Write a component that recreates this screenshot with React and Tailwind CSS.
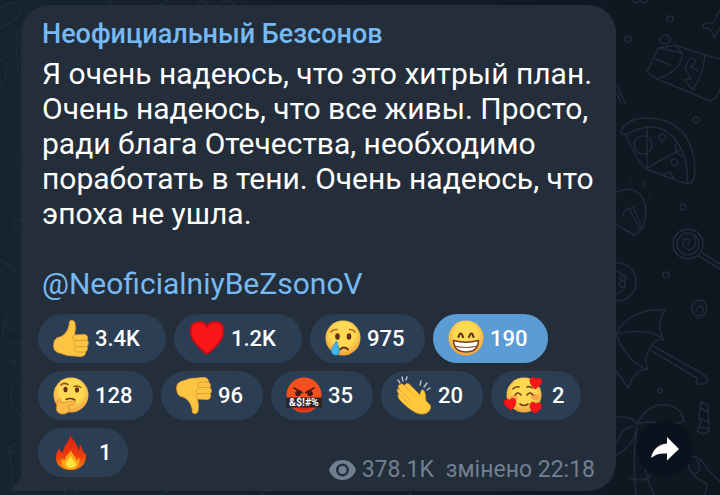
import React from 'react';

const Thumb = () => (
  <g strokeLinejoin="round" strokeLinecap="round">
    <path
      d="M16.500 2C17 -0.500 21 -0.500 22 3C23 8 22 11 21.500 15L31 14.500C34.500 14.500 35.500 18 34 20C36 22 35.500 25 34 26.500C35 29 34 31 32.500 32C33 35 30 36.800 27 36.500L15 35.500C12 35 9 33.500 5 32.500C1 31 0 27 1 23C1.500 19 4 17.500 7 17C11 15.500 16 11 16.500 2Z"
      fill="#fcc440"
      stroke="#eda136"
      strokeWidth=".8"
    />
    <path d="M21.500 15C19 17 19 19 22 20.500H33M22 20.500C20 22 20 25 23 26.500H33M23 26.500C21 28 21 31 24 32H32" fill="none" stroke="#e89b33" strokeWidth="1" />
  </g>
);

const Face = ({ id, children }) => (
  <g>
    <radialGradient id={id} cx="50%" cy="40%" r="60%">
      <stop offset="55%" stopColor="#ffd953" />
      <stop offset="100%" stopColor="#f2a03a" />
    </radialGradient>
    <circle cx="18" cy="18" r="17.500" fill={`url(#${id})`} />
    {children}
  </g>
);

const Heart = ({ transform }) => (
  <path
    transform={transform}
    d="M18 34C10 28 1.500 20 1.500 11C1.500 5 5 2 10 2C14 2 17 4 18 7C19 4 22 2 26 2C31 2 34.500 5 34.500 11C34.500 20 26 28 18 34Z"
    fill="#fb1618"
    stroke="#c50d18"
    strokeWidth="1.800"
  />
);

const emojis = {
  like: <Thumb />,
  heart: <Heart />,
  cry: (
    <Face id="cry">
      <ellipse cx="12.500" cy="16.500" rx="2.300" ry="3.200" fill="#633014" />
      <ellipse cx="24" cy="16.500" rx="2.300" ry="3.200" fill="#633014" />
      <path d="M6 12Q8 9 12 9.500M24.500 9.500Q28 9 30 12" fill="none" stroke="#a8622a" strokeWidth="1.500" strokeLinecap="round" />
      <path d="M15 29.500Q19 25.500 23 29.500" fill="none" stroke="#633014" strokeWidth="1.800" strokeLinecap="round" />
      <path d="M11.500 21C9 25 6.500 28 6.500 31C6.500 34 9 35.500 11.500 35C14 34.500 15 32 14 29C13.500 26 12 24 11.500 21Z" fill="#45b5ee" stroke="#2489c9" strokeWidth=".8" />
    </Face>
  ),
  grin: (
    <Face id="grin">
      <path d="M10.500 17Q12.500 10 15 17M21 17Q23.500 10 25.500 17" fill="none" stroke="#633014" strokeWidth="2.200" strokeLinecap="round" />
      <path d="M5.500 20.500Q18 24 30.500 20.500Q30 32 18 32Q6 32 5.500 20.500Z" fill="#fff" stroke="#7a3c1c" strokeWidth="1.500" strokeLinejoin="round" />
      <path d="M7 26Q18 29 29 26" fill="none" stroke="#8b5434" strokeWidth="1.200" />
    </Face>
  ),
  think: (
    <Face id="think">
      <ellipse cx="12.500" cy="12.500" rx="2.100" ry="2.700" fill="#633014" />
      <ellipse cx="24" cy="13" rx="2.100" ry="2.700" fill="#633014" />
      <path d="M8 8Q11 5 15 7.500M21 9.500Q25 8 28 10.500" fill="none" stroke="#8b5020" strokeWidth="1.500" strokeLinecap="round" />
      <path d="M13 22.500Q17 20.500 22 23" fill="none" stroke="#633014" strokeWidth="1.500" strokeLinecap="round" />
      <path d="M5 23C7 20 8 22 7.500 26L20 24C24 24 23 27 20 28L15 29C18 31 16 37 10 37C5 37 3 34 3.500 30Z" fill="#fbbb48" stroke="#e08e30" strokeWidth=".8" strokeLinejoin="round" />
    </Face>
  ),
  dislike: (
    <g transform="translate(0 37) scale(1 -1)">
      <Thumb />
    </g>
  ),
  angry: (
    <g>
      <circle cx="18" cy="18" r="17.500" fill="#f4511e" />
      <path d="M2 24A17.500 17.500 0 0 0 34 24Z" fill="#d92d16" />
      <path d="M8 11L16 15.500M28 11L20 15.500" stroke="#5a1a10" strokeWidth="2" strokeLinecap="round" />
      <circle cx="12" cy="16.500" r="2.800" fill="#4a1710" />
      <circle cx="24" cy="16.500" r="2.800" fill="#4a1710" />
      <rect x="0" y="20.500" width="36" height="10" rx="1" fill="#2c2326" />
      <text x="18" y="29" textAnchor="middle" fontSize="10.500" fontWeight="700" fill="#fff">&amp;$!#%</text>
    </g>
  ),
  clap: (
    <g strokeLinecap="round" strokeLinejoin="round">
      <path d="M4 8C5 6 7 7 9 9C9 6 12 6 14 8L24 18C25 15 25 12 27 13C30 15 29 20 30 24L34 28C36 32 32 37 26 37C19 37 11 30 5 24C2 21 1 18 3 17C0 13 1 11 4 13C1 10 3 7 4 8Z" fill="#ffc83d" stroke="#eaa02e" strokeWidth=".8" />
      <path d="M4 13L14 23M4 18L12 26M9 9L19 19" stroke="#e9a236" strokeWidth="1" />
      <path d="M2 3L4 6M6 0L7 4M11 0L10 3M24 8L25 4M28 10L31 6M31 13L34 11" stroke="#b7c4d0" strokeWidth="1.400" />
    </g>
  ),
  love: (
    <Face id="love">
      <ellipse cx="8" cy="21" rx="4" ry="3" fill="#f6904b" opacity=".6" />
      <ellipse cx="29" cy="20" rx="4" ry="3" fill="#f6904b" opacity=".7" />
      <path d="M9 18Q12 14 15 18M21 18Q24 14 27 18M7 12Q9 9 13 10M21 10Q24 9 26 11M14 27Q18 30 22 27" fill="none" stroke="#74401b" strokeWidth="1.600" strokeLinecap="round" />
      <Heart transform="translate(24 -1) rotate(8) scale(.36)" />
      <Heart transform="translate(-3 22) rotate(-8) scale(.36)" />
      <Heart transform="translate(24 24) rotate(8) scale(.35)" />
    </Face>
  ),
  fire: (
    <g>
      <linearGradient id="flame" x1="0" y1="0" x2="0" y2="1">
        <stop offset="0%" stopColor="#d9200f" />
        <stop offset="60%" stopColor="#ee3c0d" />
        <stop offset="100%" stopColor="#fb850c" />
      </linearGradient>
      <path d="M17 0C18 5 25 9 25.500 17C27 15 27 12 26.500 10C30 14 29 18 33 20C34 29 28 36 18 36C8 36 2 30 3 22C3 19 5 17 6 14C7 16 8 18 10 19C10 11 17 8 17 0Z" fill="url(#flame)" />
      <path d="M18 16C19 21 23 22 23.500 26C25 26 26 24 26 23C28 30 24 35.500 18 35.500C11 35.500 7 31 9 24C10 26 11 27 12 26C12 21 17 20 18 16Z" fill="#ffa514" />
      <path d="M18 22C19 26 23 27 23 31C22 35 14 35 13 31C12 27 16 26 18 22Z" fill="#ffe23e" />
    </g>
  ),
};

const reactions = [
  { emoji: 'like', label: 'Like', count: '3.4K', size: 'min-w-[128px] gap-1.5' },
  { emoji: 'heart', label: 'Heart', count: '1.2K', size: 'min-w-[128px] gap-1.5' },
  { emoji: 'cry', label: 'Cry', count: '975', size: 'min-w-[115px] gap-1.5' },
  { emoji: 'grin', label: 'Grin', count: '190', size: 'min-w-[115px] gap-1.5', active: true },
  { emoji: 'think', label: 'Think', count: '128', size: 'min-w-[115px] gap-1.5' },
  { emoji: 'dislike', label: 'Dislike', count: '96', size: 'min-w-[102px] gap-1.5' },
  { emoji: 'angry', label: 'Angry', count: '35', size: 'min-w-[102px] gap-1.5' },
  { emoji: 'clap', label: 'Clap', count: '20', size: 'min-w-[102px] gap-1.5' },
  { emoji: 'love', label: 'Love', count: '2', size: 'min-w-[90px] gap-2.5' },
  { emoji: 'fire', label: 'Fire', count: '1', size: 'min-w-[90px] gap-2.5' },
];

const Reaction = ({ reaction }) => (
  <button
    aria-label={`${reaction.label} ${reaction.count}`}
    aria-pressed={Boolean(reaction.active)}
    className={`flex h-[49px] items-center rounded-full pl-[15px] text-[22px] font-medium text-white ${reaction.size} ${reaction.active ? 'bg-[#5c9cd5]' : 'bg-[#2c3e53]'}`}
  >
    <svg viewBox="0 0 36 37" className="h-[37px] w-9 shrink-0 overflow-visible" aria-hidden="true">
      {emojis[reaction.emoji]}
    </svg>
    <span>{reaction.count}</span>
  </button>
);

// Faint doodles on the chat wallpaper
const Wallpaper = () => (
  <svg
    viewBox="0 0 720 495"
    preserveAspectRatio="xMaxYMin slice"
    className="absolute inset-0 h-full w-full"
    fill="none"
    stroke="#1e2b39"
    strokeWidth="1.500"
    strokeLinecap="round"
    strokeLinejoin="round"
    aria-hidden="true"
  >
    {/* left edge */}
    <path d="M0 8Q18 -2 20 8Q20 20 0 28M20 30Q12 38 19 46Q13 54 19 62Q15 70 21 75M0 60Q10 60 5 78L0 90M20 153Q12 158 20 164M21 220Q13 218 14 226L21 234" />
    <path d="M0 260L14 268Q16 276 8 277L0 270M20 310Q12 306 11 315Q4 314 6 324Q-2 338 10 342L21 343M3 325L20 332M21 375Q4 390 15 408L21 415M20 442L9 447L14 491M10 452L20 450" />
    <circle cx="13" cy="362" r="2" />
    <path d="M109 0L112 5M168 0Q164 6 157 5M197 5Q202 -2 208 5M217 5Q228 -3 235 5" />
    {/* dots */}
    <circle cx="670" cy="19" r="3" />
    <circle cx="628" cy="39" r="3" />
    <circle cx="696" cy="120" r="3" />
    <circle cx="683" cy="207" r="3" />
    <circle cx="666" cy="275" r="3" />
    <circle cx="660" cy="391" r="2" />
    {/* bottle */}
    <path d="M633 0Q635 5 640 1Q645 5 648 0M720 10L713 23Q702 22 703 28L710 29L714 37L720 28" />
    <path d="M658 48L647 72L657 79L710 101L716 98L720 89M658 48L675 45L705 55L720 59M658 48L682 53L675 45M682 53Q683 70 657 79M654 58L670 65M705 55Q703 75 693 90L684 80L691 79L685 68Q689 54 696 60L691 67L698 71M660 43Q658 36 667 35Q674 38 667 44Z" />
    <path d="M617 85L625 103M617 93L621 103" />
    {/* pizza slice */}
    <path d="M621 131Q626 120 642 118Q686 116 694 158Q697 182 689 184L678 181L646 169Q634 156 626 135M621 131Q622 136 627 134Q668 112 685 158Q688 172 687 182M647 126V168L681 149M664 175Q670 168 674 179M676 143Q673 153 683 156" />
    <circle cx="643" cy="145" r="9" />
    <path d="M659 136Q664 131 666 138Q660 145 659 136M671 160Q677 157 678 164Q672 170 671 160" />
    {/* light bulb */}
    <path d="M617 192Q638 183 645 204Q647 214 643 228L634 235L617 225M624 217Q622 210 629 209L641 230M630 209L633 207L642 227M630 178V180M643 185L645 183M650 198L651 197" />
    {/* lollipop */}
    <circle cx="688" cy="244" r="15" />
    <circle cx="688" cy="244" r="11" />
    <path d="M688 244Q692 238 684 239Q680 248 690 250Q699 245 694 237M702 253L720 264M699 256L720 269" />
    {/* billiard ball */}
    <path d="M617 263A19 19 0 0 1 617 301M617 271A12 12 0 0 1 617 294" />
    <circle cx="623" cy="278" r="3" />
    <circle cx="622" cy="284" r="3" />
    <path d="M696 311Q699 303 703 308Q704 317 695 315Q688 307 696 301Q706 298 707 309Q704 319 696 318" />
    {/* umbrella */}
    <path d="M616 334Q630 308 665 310Q655 326 664 340Q653 338 649 350Q643 359 648 370Q637 366 628 388L616 371M616 334Q650 327 664 340M616 334Q626 361 648 370M650 350L697 378Q698 384 695 382M653 346L703 374Q711 380 705 384L697 384" />
    {/* candy */}
    <path d="M701 402L708 405L709 431L703 434L697 431L701 423L699 416ZM700 408L708 412M699 418L708 422M699 427L708 429" />
    {/* palm */}
    <path d="M617 417Q632 415 637 424Q645 408 659 405Q680 403 684 421L677 424L646 422L637 424Q637 443 617 455M634 426Q621 428 617 442M637 430Q632 455 636 495M642 446Q644 474 654 495M630 478Q645 483 651 475" />
    {/* fish */}
    <path d="M689 457Q699 453 708 470L720 482M689 457Q685 471 701 481L707 484L705 495M697 460Q703 470 695 474" />
    <path d="M65 495V491M75 495V491M160 495L168 491M260 495L266 491M410 495V492" />
  </svg>
);

const App = () => {
  return (
    <div className="relative flex min-h-screen items-end overflow-hidden bg-[linear-gradient(90deg,#172330_0%,#101923_80%,#0e171f_100%)] pt-[5px] pb-1 pl-[21px] font-[Roboto,sans-serif]">
      <Wallpaper />
      <article className="relative min-w-0 flex-1 rounded-[28px] rounded-bl-none bg-[#232e3a] pt-[13px] pr-[21px] pb-2 pl-[17px]">
        <svg viewBox="0 0 12 20" className="absolute bottom-0 -left-[11px] h-5 w-3" aria-hidden="true">
          <path d="M12 0Q10 12 0 19V20H12Z" fill="#232e3a" />
        </svg>
        <h2 className="pl-1 text-[27px] leading-8 font-medium text-[#76b9f3]">Неофициальный Безсонов</h2>
        <div className="mt-1.5 pl-1 text-[30px] leading-[35px] text-white">
          <p>
            Я очень надеюсь, что это хитрый план. Очень надеюсь, что все живы. Просто, ради блага Отечества, необходимо
            поработать в тени. Очень надеюсь, что эпоха не ушла.
          </p>
          <a href="#channel" className="mt-[35px] block text-[#76b9f3]">@NeoficialniyBeZsonoV</a>
        </div>
        <div className="mt-[13px] flex flex-wrap gap-2">
          {reactions.map((reaction) => (
            <Reaction key={reaction.emoji} reaction={reaction} />
          ))}
        </div>
        <footer className="-mt-5 flex items-center justify-end text-[23px] leading-[26px] text-[#718091]">
          <svg viewBox="0 0 27 20" className="mr-1.5 h-5 w-[27px]" aria-hidden="true">
            <path
              d="M13.500 0C7 0 2 4 0 10C2 16 7 20 13.500 20C20 20 25 16 27 10C25 4 20 0 13.500 0ZM13.500 3.500A6.500 6.500 0 1 1 13.500 16.500A6.500 6.500 0 0 1 13.500 3.500Z"
              fill="currentColor"
              fillRule="evenodd"
            />
            <circle cx="13.500" cy="10" r="4" fill="currentColor" />
          </svg>
          <span>378.1K</span>
          <span className="ml-3">змінено 22:18</span>
        </footer>
      </article>
      <div className="relative flex w-[104px] shrink-0 pb-3.5 pl-[21px]">
        <button aria-label="Share" className="flex h-14 w-14 items-center justify-center rounded-full bg-[#0a131d]">
          <svg viewBox="0 0 28 24" className="h-6 w-7" aria-hidden="true">
            <path d="M16 0L28 12L16 23.500V16.500C9 16 5 17 0 21C2 12 8 7 16 6.500Z" fill="#fff" />
          </svg>
        </button>
      </div>
    </div>
  );
};

export default App;
